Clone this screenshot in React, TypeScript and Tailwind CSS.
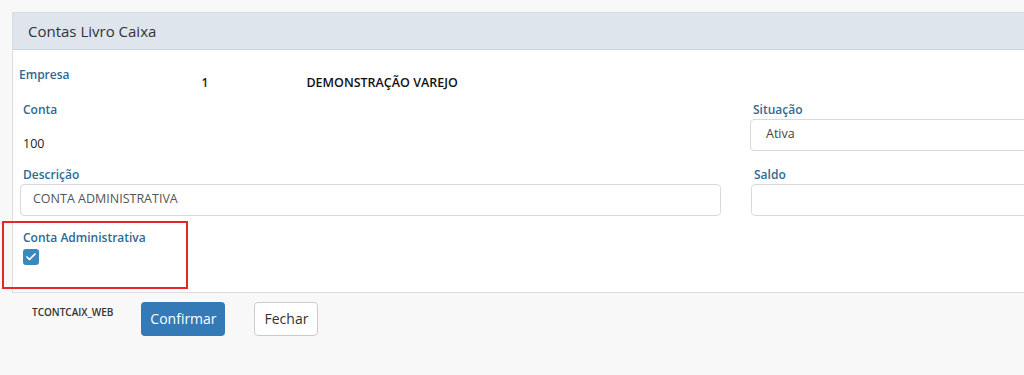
import { Check } from 'lucide-react';

const label = 'text-[12px] font-semibold text-[#2e6a93] leading-none';
const field = 'h-8 rounded border border-[#d9d9d9] bg-white px-3 text-[12.5px] text-[#555] flex items-center';

export default function App() {
  return (
    <div className="min-h-[375px] w-[1024px] overflow-hidden bg-[#f8f8f8] pt-3 pl-3 font-['Open_Sans','Noto_Sans',sans-serif]">
      <div className="relative w-[1040px] border border-[#dcdcdc] bg-white">
        <div className="h-[37px] border-b border-[#c9d4de] bg-[#dee5ec] pl-[15px] flex items-center">
          <h1 className="text-[15px] font-medium text-[#333]">Contas Livro Caixa</h1>
        </div>

        <div className="pl-[6px] pt-[19px] pb-[27px]">
          <div className="flex">
            <span className={label}>Empresa</span>
            <span className="ml-[132px] mt-[5px] text-[12px] font-semibold text-[#222]">1</span>
            <span className="ml-[98px] mt-[5px] text-[12.5px] font-semibold text-[#111]">DEMONSTRAÇÃO VAREJO</span>
          </div>

          <div className="mt-[11px] flex gap-[30px] pl-[1px]">
            <div className="w-[700px] pl-[3px]">
              <div className={label}>Conta</div>
              <div className="mt-[19px] text-[12.5px] text-[#222]">100</div>
            </div>
            <div className="flex-1">
              <div className={`${label} pl-[3px]`}>Situação</div>
              <div className={`${field} mt-[3px]`}>
                <span className="pl-[3px] text-[#444]">Ativa</span>
              </div>
            </div>
          </div>

          <div className="mt-[15px] flex gap-[30px] pl-[1px]">
            <div className="w-[701px]">
              <div className={`${label} pl-[3px]`}>Descrição</div>
              <div className={`${field} mt-[3px]`}>CONTA ADMINISTRATIVA</div>
            </div>
            <div className="flex-1">
              <div className={`${label} pl-[3px]`}>Saldo</div>
              <div className={`${field} mt-[3px]`} />
            </div>
          </div>

          <div className="mt-[16px] pl-[4px]">
            <div className={label}>Conta Administrativa</div>
            <div className="mt-[5px] flex h-4 w-4 items-center justify-center rounded-[3px] bg-[#3a88c0]">
              <Check className="h-3 w-3 text-white" strokeWidth={3.5} />
            </div>
          </div>
        </div>

        <div className="absolute left-[-11px] top-[208px] h-[68px] w-[186px] border-2 border-[#e4262b]" />
      </div>

      <div className="mt-[9px] flex items-start pl-[20px]">
        <span className="mt-[3px] text-[10px] font-semibold text-[#333]">TCONTCAIX_WEB</span>
        <button className="ml-[28px] h-[34px] w-[84px] rounded bg-[#337ab7] text-[14px] text-white">Confirmar</button>
        <button className="ml-[29px] h-[34px] w-[64px] rounded border border-[#ccc] bg-white text-[14px] text-[#333]">Fechar</button>
      </div>
    </div>
  );
}
